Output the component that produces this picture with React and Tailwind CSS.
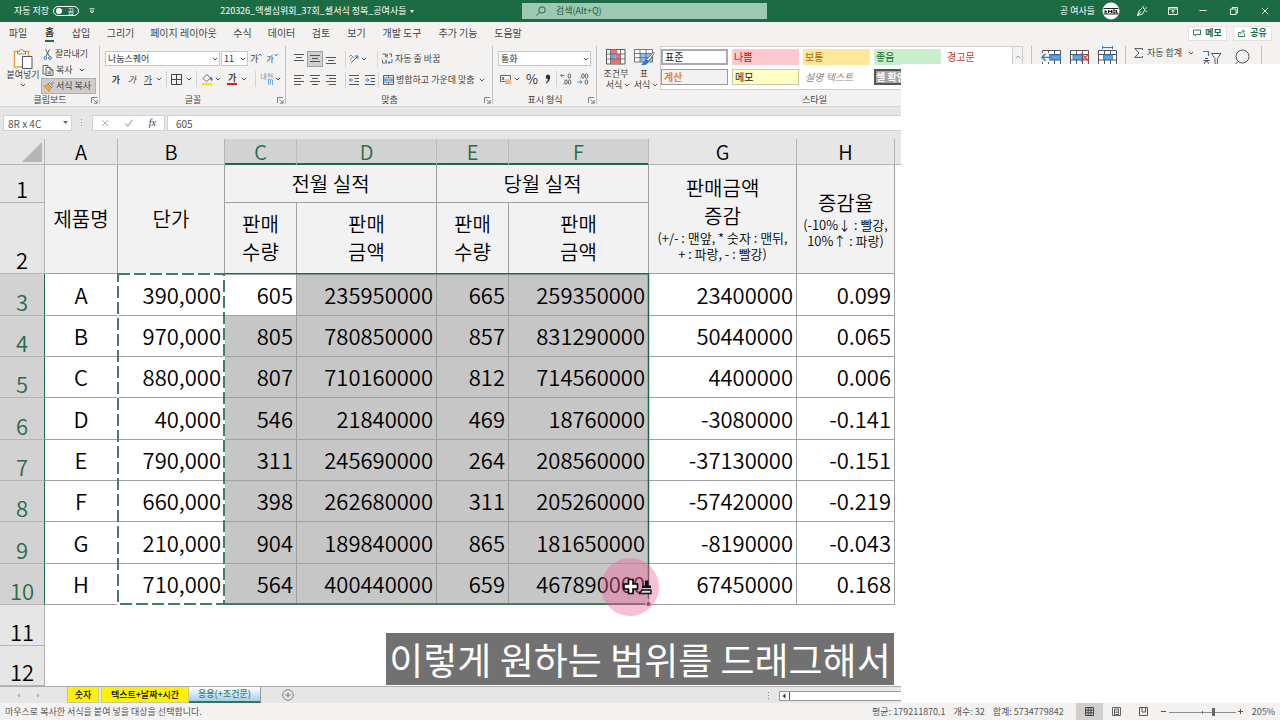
import React from 'react';

const Chevron = ({ className = '' }) => (
  <svg viewBox="0 0 6 4" className={`h-1 w-1.5 shrink-0 ${className}`} fill="none" stroke="#555" strokeWidth="1">
    <path d="M0.8 0.8 3 3 5.2 0.8" />
  </svg>
);

const Launcher = () => (
  <button aria-label="대화 상자 표시" className="absolute right-0.5 bottom-0.5">
    <svg viewBox="0 0 7 7" className="h-[7px] w-[7px]" fill="none" stroke="#666" strokeWidth="0.8">
      <path d="M0.5 6V0.5H6M2.5 2.5 6 6M6.2 3v3.2H3" />
    </svg>
  </button>
);

const Group = ({ label, className = '', launcher, children }) => (
  <section className={`relative flex shrink-0 flex-col ${className}`}>
    <div className="flex-1">{children}</div>
    <div className="h-3 text-center text-[9px] leading-3">{label}</div>
    {launcher && <Launcher />}
    <span className="absolute top-0.5 right-0 bottom-0.5 w-px bg-[#c4c4c4]" />
  </section>
);

const Sep = () => <span className="h-4 w-px shrink-0 bg-[#d4d4d4]" />;

const Lines = ({ rows }) => (
  <svg viewBox="0 0 10 10" className="h-2.5 w-2.5" stroke="#555" strokeWidth="1">
    {rows.map(([a, b, y]) => (
      <path key={y} d={`M${a} ${y}.5H${b}`} />
    ))}
  </svg>
);

const aligns = {
  top: [[0, 10, 0], [2, 8, 3], [0, 10, 6]],
  middle: [[0, 10, 1], [2, 8, 4], [0, 10, 7]],
  bottom: [[0, 10, 3], [2, 8, 6], [0, 10, 9]],
  left: [[0, 10, 0], [0, 7, 3], [0, 10, 6], [0, 7, 9]],
  center: [[0, 10, 0], [2, 8, 3], [0, 10, 6], [2, 8, 9]],
  right: [[0, 10, 0], [3, 10, 3], [0, 10, 6], [3, 10, 9]],
};

const AlignButton = ({ kind, label, active }) => (
  <button
    aria-label={label}
    className={`flex h-4 w-4 items-center justify-center ${active ? 'border border-[#a0a0a0] bg-[#cfcfcf]' : ''}`}
  >
    <Lines rows={aligns[kind]} />
  </button>
);

const Indent = ({ flip, label }) => (
  <button aria-label={label} className="flex h-4 w-4 items-center justify-center">
    <svg viewBox="0 0 10 10" className="h-2.5 w-2.5" fill="none">
      <path d="M0 0.5H10M5.5 3.5H10M5.5 6.5H10M0 9.5H10" stroke="#555" />
      <path d={flip ? 'M0 5H4M2.4 3.4 4 5 2.4 6.6' : 'M4.2 5H0.5M2 3.4 0.5 5 2 6.6'} stroke="#2b7cd3" />
    </svg>
  </button>
);

const Decimals = ({ more, label }) => (
  <button aria-label={label} className="flex h-4 w-[17px] items-center justify-center">
    <svg viewBox="0 0 12 12" className="h-3 w-3" fill="none" stroke="#555" strokeWidth="0.9">
      {more ? (
        <>
          <path d="M4.5 2.5H0.8M2.2 1 0.6 2.5 2.2 4" stroke="#2b7cd3" />
          <ellipse cx="9.4" cy="3" rx="1.3" ry="2.2" />
          <ellipse cx="6" cy="9" rx="1.3" ry="2.2" />
          <ellipse cx="9.6" cy="9" rx="1.3" ry="2.2" />
          <path d="M3.4 11h.8" />
        </>
      ) : (
        <>
          <ellipse cx="6" cy="3" rx="1.3" ry="2.2" />
          <ellipse cx="9.6" cy="3" rx="1.3" ry="2.2" />
          <path d="M3.4 5h.8" />
          <path d="M0.5 9H5M3.4 7.4 5 9 3.4 10.6" stroke="#2b7cd3" />
          <ellipse cx="9.4" cy="9" rx="1.3" ry="2.2" />
        </>
      )}
    </svg>
  </button>
);

const Select = ({ label, value, className }) => (
  <div className={`relative h-[15px] ${className}`}>
    <select
      aria-label={label}
      className="block h-full w-full appearance-none border border-[#c8c6c4] bg-white pl-0.5 text-[9px] leading-3 text-[#333] outline-none"
    >
      <option>{value}</option>
    </select>
    <Chevron className="pointer-events-none absolute top-1.5 right-0.5" />
  </div>
);

const ribbonTabs = [
  ['파일', 'w-9'], ['홈', 'w-[27px]'], ['삽입', 'w-9'], ['그리기', 'w-[43px]'], ['페이지 레이아웃', 'w-[83px]'],
  ['수식', 'w-[35px]'], ['데이터', 'w-[43px]'], ['검토', 'w-9'], ['보기', 'w-[35px]'], ['개발 도구', 'w-14'],
  ['추가 기능', 'w-14'], ['도움말', 'w-11'],
];

const TitleBar = () => (
  <header className="flex h-[22px] items-center bg-[#1d6b45] pl-3.5 text-[9px] text-white">
    <span>자동 저장</span>
    <button role="switch" aria-checked="false" aria-label="자동 저장" className="ml-1 flex h-2.5 w-[26px] items-center justify-between rounded-full border border-white px-0.5 text-[7px] leading-none">
      <span className="h-1.5 w-1.5 rounded-full bg-white" />
      <span className="pr-0.5">끔</span>
    </button>
    <button aria-label="빠른 실행 도구 모음" className="ml-2.5">
      <svg viewBox="0 0 6 6" className="h-1.5 w-1.5" fill="none" stroke="#fff" strokeWidth="0.9">
        <path d="M0.5 0.8h5M1 3 3 5 5 3z" />
      </svg>
    </button>
    <div className="ml-[125px] flex items-center gap-1">
      <span>220326_엑셀심위회_37회_셀서식 정복_공여사들</span>
      <svg viewBox="0 0 4 3" className="h-[3px] w-1" fill="#fff"><path d="M0 0h4L2 3z" /></svg>
    </div>
    <label className="ml-auto flex h-4 w-[245px] items-center bg-[#9dc8b2] pl-3.5 text-[#1c5a3b]">
      <svg viewBox="0 0 10 10" className="h-2.5 w-2.5" fill="none" stroke="#1c5a3b" strokeWidth="0.9">
        <circle cx="6" cy="4" r="3.2" />
        <path d="M3.7 6.3.5 9.5" />
      </svg>
      <input placeholder="검색(Alt+Q)" aria-label="검색" className="ml-2.5 w-40 bg-transparent text-[9px] outline-none placeholder:text-[#1c5a3b]" />
    </label>
    <div className="ml-[293px] flex items-center">
      <span>공 여사들</span>
      <svg viewBox="0 0 18 18" className="ml-[7px] h-[18px] w-[18px]">
        <circle cx="9" cy="9" r="8.5" fill="#fff" />
        <path d="M1.5 6.5h15M1.5 12h15" stroke="#222" strokeWidth="1" />
        <path d="M3 8v3h2M3 9.500h2M6.500 11V8l1.500 2 1.500-2v3M11 8h2v3h-2zM14.500 8v3h1.500" stroke="#222" strokeWidth="1" fill="none" />
      </svg>
    </div>
    <div className="flex items-center">
      <button aria-label="펜" className="flex w-11 justify-center">
        <svg viewBox="0 0 12 12" className="h-3 w-3" fill="none" stroke="#fff" strokeWidth="0.9">
          <path d="M1.500 10.500 3 6l3.500-3.500 2.500 2L6.500 9zM7 2l1.200-1M9.500 3.500 11 2.500M9.500 6l1.500.5M1.500 10.500 5 6.500" />
        </svg>
      </button>
      <button aria-label="리본 메뉴 표시 옵션" className="flex w-[17px] justify-center">
        <svg viewBox="0 0 10 8" className="h-2 w-2.5" fill="none" stroke="#fff" strokeWidth="0.9">
          <path d="M.5.5h9v7h-9zM.5 2h9M5 6.500V3.200M3.500 4.700 5 3.200l1.500 1.500" />
        </svg>
      </button>
      <button aria-label="최소화" className="ml-1.5 flex w-[31px] justify-center">
        <svg viewBox="0 0 8 8" className="h-2 w-2" stroke="#fff"><path d="M0.500 3.500h7" /></svg>
      </button>
      <button aria-label="이전 크기로 복원" className="flex w-[31px] justify-center">
        <svg viewBox="0 0 8 8" className="h-2 w-2" fill="none" stroke="#fff" strokeWidth="0.9">
          <path d="M.5 2h5.500v5.500H.5zM2.200 2V.5h5.300V6H6" />
        </svg>
      </button>
      <button aria-label="닫기" className="flex w-[31px] justify-center">
        <svg viewBox="0 0 8 8" className="h-2 w-2" stroke="#fff" strokeWidth="0.9"><path d="m.8.8 6.400 6.400M7.200.8.800 7.200" /></svg>
      </button>
    </div>
  </header>
);

const TabStrip = () => (
  <nav className="flex h-[22px] items-center text-[10px] text-[#444]">
    {ribbonTabs.map(([t, w]) => (
      <button key={t} className={`flex shrink-0 justify-center whitespace-nowrap ${w}`}>
        <span className={t === '홈' ? 'border-b-2 border-[#1d6b45] leading-4 font-medium text-[#222]' : 'leading-4'}>{t}</span>
      </button>
    ))}
    <div className="mr-2 ml-auto flex gap-1.5 text-[9px] font-bold text-[#1d6b45]">
      <button className="flex h-[15px] w-[39px] items-center justify-center gap-1 border border-[#e3e3e3] bg-white">
        <svg viewBox="0 0 8 8" className="h-2 w-2" fill="none" stroke="#1d6b45" strokeWidth="0.9"><path d="M.5 1h7v4.500H3.500L2 7V5.500H.5z" /></svg>
        메모
      </button>
      <button className="flex h-[15px] w-[39px] items-center justify-center gap-1 border border-[#e3e3e3] bg-white">
        <svg viewBox="0 0 8 8" className="h-2 w-2" fill="none" stroke="#1d6b45" strokeWidth="0.9"><path d="M2 3.500H.6v4h6v-3M2.500 5c.3-2 1.500-2.700 3-2.700M4.500.6 6.500 2.300 4.500 4" /></svg>
        공유
      </button>
    </div>
  </nav>
);

const Clipboard = () => (
  <Group label="클립보드" launcher className="w-[100px]">
    <div className="flex pl-1.5">
      <button className="flex w-[34px] flex-col items-center pt-1 text-[9px] leading-3 whitespace-nowrap">
        <svg viewBox="0 0 20 21" className="h-[21px] w-5" fill="none">
          <path d="M1.500 3.500h14v15.500h-14z" fill="#fff" stroke="#eba03c" strokeWidth="1.500" />
          <path d="M4.500 6V3.500h2C6.500 0.800 10.500 0.800 10.500 3.500h2V6z" fill="#fff" stroke="#777" strokeWidth="0.9" />
          <path d="M9.500 8.500h9.500v12H9.500z" fill="#fff" stroke="#555" />
        </svg>
        <span>붙여넣기</span>
        <Chevron className="mt-0.5" />
      </button>
      <div className="ml-px flex w-[55px] flex-col pt-0.5 text-[9px] leading-4 whitespace-nowrap">
        <button className="flex h-4 items-center pl-0.5">
          <svg viewBox="0 0 10 11" className="h-[11px] w-2.5" fill="none">
            <path d="M2.500.5 6.500 7.500M6.500.5 2.800 7.500" stroke="#555" />
            <circle cx="2.300" cy="9" r="1.400" stroke="#2b7cd3" />
            <circle cx="7" cy="9" r="1.400" stroke="#2b7cd3" />
          </svg>
          <span className="ml-0.5">잘라내기</span>
        </button>
        <button className="flex h-4 items-center pl-px">
          <svg viewBox="0 0 12 11" className="h-[11px] w-3" fill="none" stroke="#555" strokeWidth="0.9">
            <path d="M3.500 9H1V.5h5v1.500M4 2.500h4L11 5v5.500H4zM8 2.500V5h3M5.500 7h4M5.500 8.700h4" />
          </svg>
          <span className="ml-0.5">복사</span>
          <Chevron className="ml-1.5" />
        </button>
        <button className="flex h-4 items-center border border-[#b0b0b0] bg-[#cfcdcb] pl-px">
          <svg viewBox="0 0 11 11" className="h-[11px] w-[11px]">
            <path d="m1 5 4-2 3.500 3.500L6 10.500z" fill="#f3a54a" stroke="#c97a1e" strokeWidth="0.600" />
            <path d="m5 3 1.200-1.200L9.500 5 8.500 6.500zM7.500 3 9.500.7l1 1L8.500 4z" fill="#fff" stroke="#555" strokeWidth="0.700" />
          </svg>
          <span className="ml-0.5">서식 복사</span>
        </button>
      </div>
    </div>
  </Group>
);

const FontGroup = () => (
  <Group label="글꼴" launcher className="w-[186px]">
    <div className="flex items-center pt-[7px] pl-[5px]">
      <Select label="글꼴" value="나눔스퀘어" className="w-[115px]" />
      <Select label="글꼴 크기" value="11" className="ml-px w-[27px]" />
      <button aria-label="글꼴 크기 크게" className="ml-0.5 flex text-[9px] leading-3">
        가
        <svg viewBox="0 0 4 4" className="h-1 w-1" fill="none" stroke="#2b7cd3"><path d="M.5 2.800 2 1l1.500 1.800" /></svg>
      </button>
      <button aria-label="글꼴 크기 작게" className="ml-1 flex text-[8px] leading-3">
        가
        <svg viewBox="0 0 4 4" className="h-1 w-1" fill="none" stroke="#2b7cd3"><path d="M.5 1 2 2.800 3.500 1" /></svg>
      </button>
    </div>
    <div className="mt-[5px] flex h-4 items-center pl-2 text-[9px] leading-none">
      <button className="w-4 font-bold" aria-label="굵게">가</button>
      <button className="w-4 italic" aria-label="기울임꼴">가</button>
      <button className="w-4 underline" aria-label="밑줄">가</button>
      <Chevron className="mr-1" />
      <Sep />
      <button aria-label="테두리" className="ml-1">
        <svg viewBox="0 0 11 11" className="h-[11px] w-[11px]" fill="none" stroke="#444"><path d="M.5.5h10v10H.5zM5.500.5v10M.5 5.500h10" /></svg>
      </button>
      <Chevron className="mx-1" />
      <Sep />
      <button aria-label="채우기 색" className="ml-1">
        <svg viewBox="0 0 12 13" className="h-[13px] w-3" fill="none">
          <path d="m2 5.500 3.800-4L9.500 5 5.500 8.700z" fill="#fff" stroke="#555" strokeWidth="0.9" />
          <path d="M10 4c1 1.500 1.500 2.500.8 3.500-1-.5-1.300-1.500-.8-3.500z" fill="#2b7cd3" stroke="#2b7cd3" />
          <path d="M0.500 10h11v2.500H.5z" fill="#ffe800" />
        </svg>
      </button>
      <Chevron className="mr-1.5 ml-0.5" />
      <button className="border-b-2 border-[#d8201a] px-px text-[9px] leading-[10px] font-bold">가</button>
      <Chevron className="mr-2 ml-1" />
      <Sep />
      <button aria-label="윗주 필드" className="ml-1 flex flex-col items-end text-[7px] leading-[7px] whitespace-nowrap text-[#888]">
        내천
        <svg viewBox="0 0 5 5" className="h-[5px] w-[5px]" fill="none" stroke="#6aa9e6"><path d="M.5 0v5M2.500 0v4M4.500 0v5" /></svg>
      </button>
      <Chevron className="ml-0.5" />
    </div>
  </Group>
);

const AlignGroup = () => (
  <Group label="맞춤" launcher className="w-[207px]">
    <div className="mt-[7px] flex h-4 items-center pl-[5px]">
      <AlignButton kind="top" label="위쪽 맞춤" />
      <AlignButton kind="middle" label="가운데 맞춤" active />
      <AlignButton kind="bottom" label="아래쪽 맞춤" />
      <span className="w-1.5" />
      <Sep />
      <button aria-label="방향" className="ml-0.5 flex items-center">
        <svg viewBox="0 0 12 12" className="h-3 w-3" fill="none">
          <path d="m1 4 2-2 3 3M2 7l3-4" stroke="#777" strokeWidth="0.800" />
          <path d="m3 10 7-7M6.800 3H10v3.200" stroke="#2b7cd3" />
        </svg>
        <Chevron className="ml-px" />
      </button>
      <span className="w-2.5" />
      <Sep />
      <button className="ml-1 flex items-center gap-0.5 text-[9px] whitespace-nowrap">
        <svg viewBox="0 0 11 12" className="h-3 w-[11px]" fill="none" strokeWidth="0.9">
          <path d="M.5 1h3v3M5 .5V5M5 2.500h1M7 1h2.500v3M.5 7v3H3M4 6.500V11M4 8.500h1" stroke="#555" />
          <path d="M10 6v3.500H6M7.500 8 6 9.500 7.500 11" stroke="#2b7cd3" />
        </svg>
        자동 줄 바꿈
      </button>
    </div>
    <div className="mt-[5px] flex h-4 items-center pl-[5px]">
      <AlignButton kind="left" label="왼쪽 맞춤" />
      <AlignButton kind="center" label="가운데 맞춤" />
      <AlignButton kind="right" label="오른쪽 맞춤" />
      <span className="w-1.5" />
      <Sep />
      <Indent label="내어쓰기" />
      <Indent label="들여쓰기" flip />
      <Sep />
      <button className="ml-1 flex items-center gap-0.5 text-[9px] whitespace-nowrap">
        <svg viewBox="0 0 11 10" className="h-2.5 w-[11px]" fill="none">
          <path d="M.5.5h10v9H.5zM.5 3h10M.5 7h10M5.500.5V3M5.500 7v2.500" stroke="#555" strokeWidth="0.9" />
          <path d="M1 3.300h9v3.400H1z" fill="#cfe6fb" />
          <path d="M1.500 5h8M3 3.500 1.500 5 3 6.500M8 3.500 9.500 5 8 6.500" stroke="#2b7cd3" />
        </svg>
        병합하고 가운데 맞춤
        <Chevron className="ml-0.5" />
      </button>
    </div>
  </Group>
);

const NumberGroup = () => (
  <Group label="표시 형식" launcher className="w-[104px]">
    <div className="pt-[7px] pl-[5px]"><Select label="표시 형식" value="통화" className="w-[93px]" /></div>
    <div className="mt-[5px] flex h-4 items-center pl-[7px]">
      <button aria-label="회계 표시 형식">
        <svg viewBox="0 0 12 11" className="h-[11px] w-3" fill="none">
          <path d="M.5 1.500h10v6H.5zM2 3l2 3M4 3 2 6" stroke="#555" strokeWidth="0.9" />
          <path d="M5 5.500h6V10H5z" fill="#f3a54a" />
          <path d="M5 6.700h6M5 8.400h6" stroke="#f8e3c8" strokeWidth="0.600" />
        </svg>
      </button>
      <Chevron className="ml-0.5" />
      <button className="ml-1.5 w-3 text-[13px] leading-4 text-[#333]">%</button>
      <button aria-label="쉼표 스타일" className="ml-1.5">
        <svg viewBox="0 0 8 10" className="h-2.5 w-2" fill="#333"><path d="M4 .5c3 0 3.500 5.500-1.500 9l-.7-.8C3.500 7.500 4 6 3.800 5.300 1 5.300 1.300.5 4 .5z" /></svg>
      </button>
      <span className="w-1" />
      <Sep />
      <Decimals label="자릿수 늘림" more />
      <Decimals label="자릿수 줄임" />
    </div>
  </Group>
);

const styleCells = [
  ['표준', 'border-2 border-[#ababab] bg-white px-0.5 text-[#222]'],
  ['나쁨', 'bg-[#ffc7ce] px-0.5 text-[#b3141b]'],
  ['보통', 'bg-[#ffe699] px-0.5 text-[#ad6a08]'],
  ['좋음', 'bg-[#c6efce] px-0.5 text-[#1a6a22]'],
  ['경고문', 'px-0.5 text-[#c8362b]'],
  ['계산', 'border border-[#9a9a9a] bg-[#f2f2f2] px-0.5 font-bold text-[#ee8220]'],
  ['메모', 'border border-[#c9c9a0] bg-[#ffffc4] px-0.5 text-[#222]'],
  ['설명 텍스트', 'px-0.5 text-[#8a8a8a] italic'],
  ['셀 확인', 'border-2 border-[#555] bg-[#a5a5a5] font-bold text-white'],
];

const StylesGroup = () => (
  <Group label="스타일" className="w-[435px]">
    <div className="flex pt-1 pl-[7px]">
      <button className="flex w-6 flex-col items-center text-[9px] leading-[11px] whitespace-nowrap">
        <svg viewBox="0 0 20 18" className="mb-0.5 h-[18px] w-5" fill="none">
          <path d="M.5 1.500h18.500v14.500H.5z" fill="#fff" stroke="#555" />
          <path d="M4.500 1.500h7v4.500h-7zM4.500 11h10v5h-10z" fill="#f2706b" />
          <path d="M9.500 6h5v5h-5z" fill="#f2706b" />
          <path d="M4.500 6h5v5h-5z" fill="#6aa9e6" />
          <path d="M4.500 1.500V16M14.500 1.500V16M.5 6H19M.5 11H19" stroke="#666" strokeWidth="0.9" />
        </svg>
        <span>조건부</span>
        <span className="flex items-center gap-0.5 pl-1">서식<Chevron /></span>
      </button>
      <button className="ml-1 flex w-6 flex-col items-center text-[9px] leading-[11px] whitespace-nowrap">
        <svg viewBox="0 0 21 18" className="mb-0.5 h-[18px] w-[21px]" fill="none">
          <path d="M.5 1.500h18v12.500H.5z" fill="#fff" />
          <path d="M6 6h12.500v8H6z" fill="#8ac0f0" />
          <path d="M.5 1.500h18v12.500H.5zM6 1.500V14M12 1.500V14M.5 5.500h18M.5 9.700h18" stroke="#666" strokeWidth="0.9" />
          <path d="m19.500 4-7 7.500 1.800 1.800L20.500 5z" fill="#fff" stroke="#555" strokeWidth="0.800" />
          <path d="M12.500 11.500c-2 0-2.300 3.500-5.500 5 3 1.500 7.500.3 7.300-3.200z" fill="#2b7cd3" />
        </svg>
        <span>표</span>
        <span className="flex items-center gap-0.5 pl-1">서식<Chevron /></span>
      </button>
      <div className="-mt-0.5 ml-1 flex border border-[#d0cecc] bg-white">
        <div className="grid grid-cols-5 gap-x-1 gap-y-0.5 py-0.5 text-[10px]">
          {styleCells.map(([t, c]) => (
            <button key={t} className={`h-4 w-[67px] overflow-hidden text-left leading-3 whitespace-nowrap ${c}`}>{t}</button>
          ))}
        </div>
        <div className="flex w-2.5 flex-col border-l border-[#d0cecc]">
          <button aria-label="위로" className="flex flex-1 items-center justify-center border-b border-[#d0cecc] bg-[#f3f2f1]"><Chevron className="rotate-180 opacity-50" /></button>
          <button aria-label="아래로" className="flex flex-1 items-center justify-center"><Chevron /></button>
        </div>
      </div>
    </div>
  </Group>
);

const CellIcon = ({ kind }) => (
  <svg viewBox="0 0 21 20" className="h-5 w-[21px]" fill="none">
    <path d="M1.500 4.500h18v14h-18z" fill="#fff" />
    <path d="M1.500 4.500h18v14h-18zM7.500 4.500v14M13.500 4.500v14M1.500 8.500h18M1.500 14h18" stroke="#555" />
    {kind === 'insert' && (
      <>
        <path d="M6 9h13.500v4.500H6z" fill="#5aa5ea" stroke="#2b7cd3" strokeWidth="0.800" />
        <path d="M8 7v9H1V7z" fill="#f3f2f1" />
        <path d="M11 11.300H1M4.500 7.800 1 11.300 4.500 14.800" stroke="#2b7cd3" strokeWidth="1.300" />
      </>
    )}
    {kind === 'delete' && (
      <>
        <path d="M4 9h9v4.500H4z" fill="#5aa5ea" stroke="#2b7cd3" strokeWidth="0.800" />
        <path d="m12 7.500 8 8M20 7.500l-8 8" stroke="#e0433c" strokeWidth="1.200" />
      </>
    )}
    {kind === 'format' && (
      <>
        <path d="M6.500 9h9v4.500h-9z" fill="#5aa5ea" stroke="#2b7cd3" strokeWidth="0.800" />
        <path d="M5.500 1.500h10M5.500 0v3M15.500 0v3" stroke="#2b7cd3" />
      </>
    )}
  </svg>
);

const CellsGroup = () => (
  <Group label="셀" className="w-[94px]">
    <div className="flex gap-[7px] pt-0.5 pl-[9px]">
      <button aria-label="삽입"><CellIcon kind="insert" /></button>
      <button aria-label="삭제"><CellIcon kind="delete" /></button>
      <button aria-label="서식"><CellIcon kind="format" /></button>
    </div>
  </Group>
);

const EditGroup = () => (
  <Group label="편집" className="w-[136px]">
    <div className="flex pt-px pl-2">
      <button className="flex h-4 items-center text-[9px] whitespace-nowrap">
        <svg viewBox="0 0 9 10" className="h-2.5 w-[9px]" fill="none" stroke="#555"><path d="M8.500 2V.6H.8L5 5 .8 9.400h7.700V8" /></svg>
        <span className="ml-1">자동 합계</span>
        <Chevron className="ml-1.5" />
      </button>
      <button aria-label="정렬 및 필터" className="ml-2 flex">
        <svg viewBox="0 0 20 18" className="mt-1 h-[18px] w-5" fill="none" stroke="#555">
          <path d="M1 2.500h5.500V7" stroke="#2b7cd3" strokeWidth="1.200" />
          <path d="M9.500 4.500h9.500l-3.700 5v7l-2.300-2v-5z" fill="#fff" />
          <path d="M3 9.500h3M1.500 11.500h6" />
          <circle cx="4.500" cy="14.500" r="2" />
        </svg>
      </button>
      <button aria-label="찾기 및 선택" className="ml-2.5 flex pt-1">
        <svg viewBox="0 0 18 19" className="h-[19px] w-[18px]" fill="none" stroke="#555"><circle cx="10.500" cy="7.500" r="6.500" /><path d="M6 12.500.8 18" /></svg>
      </button>
    </div>
  </Group>
);

const FormulaBar = () => (
  <div className="flex h-8 items-center bg-[#e6e6e6] pl-[3px] text-[#555]">
    <div className="relative h-4 w-[69px]">
      <input aria-label="이름 상자" defaultValue="8R x 4C" className="block h-full w-full border border-[#d2d2d2] bg-white pl-1 text-[10px] outline-none" />
      <svg viewBox="0 0 5 3" className="absolute top-1.5 right-1 h-[3px] w-[5px]" fill="#666"><path d="M0 0h5L2.500 3z" /></svg>
    </div>
    <svg viewBox="0 0 2 8" className="mx-[9px] h-2 w-0.5" fill="#999"><path d="M0 0h1v1H0zM0 3h1v1H0zM0 6h1v1H0z" /></svg>
    <div className="flex h-4 w-[73px] items-center justify-around border border-[#d2d2d2] bg-white">
      <button aria-label="취소"><svg viewBox="0 0 8 8" className="h-2 w-2" stroke="#b5b5b5"><path d="m.8.8 6.400 6.400M7.200.8.800 7.200" /></svg></button>
      <button aria-label="입력"><svg viewBox="0 0 8 8" className="h-2 w-2" fill="none" stroke="#b5b5b5" strokeWidth="1.300"><path d="m.5 4.500 2.300 2.500L7.500 1" /></svg></button>
      <button aria-label="함수 삽입" className="font-['Liberation_Serif',serif] text-[10px] leading-none text-[#333] italic">fx</button>
    </div>
    <input aria-label="수식 입력줄" defaultValue="605" className="ml-0.5 h-4 flex-1 border border-[#d2d2d2] bg-white pl-2 text-[10px] outline-none" />
  </div>
);

const columns = [
  ['A', 'w-[73px]'], ['B', 'w-[107px]'], ['C', 'w-[72px]'], ['D', 'w-[140px]'],
  ['E', 'w-[72px]'], ['F', 'w-[140px]'], ['G', 'w-[148px]'], ['H', 'w-[98px]'],
];
const selectedColumns = 'CDEF';

const data = [
  ['A', '390,000', '605', '235950000', '665', '259350000', '23400000', '0.099'],
  ['B', '970,000', '805', '780850000', '857', '831290000', '50440000', '0.065'],
  ['C', '880,000', '807', '710160000', '812', '714560000', '4400000', '0.006'],
  ['D', '40,000', '546', '21840000', '469', '18760000', '-3080000', '-0.141'],
  ['E', '790,000', '311', '245690000', '264', '208560000', '-37130000', '-0.151'],
  ['F', '660,000', '398', '262680000', '311', '205260000', '-57420000', '-0.219'],
  ['G', '210,000', '904', '189840000', '865', '181650000', '-8190000', '-0.043'],
  ['H', '710,000', '564', '400440000', '659', '467890000', '67450000', '0.168'],
];

const RowHead = ({ n, selected }) => (
  <th
    scope="row"
    className={`border-r border-b p-0 align-bottom text-[22px] leading-7 font-[350] ${
      selected
        ? 'border-r-[#1d6b45] border-b-[#b5b5b5] bg-[#d2d2d2] text-[#2a6a4c]'
        : 'border-[#b5b5b5] bg-[#e6e6e6] text-black'
    }`}
  >
    {n}
  </th>
);

const HeadCell = ({ className = '', children, ...rest }) => (
  <td {...rest} className={`border-r border-b border-[#a0a0a0] bg-[#f2f2f2] p-0 text-center text-[20px] leading-7 ${className}`}>
    {children}
  </td>
);

const Sheet = () => (
  <div className="relative">
    <table className="w-full table-fixed border-separate border-spacing-0 font-[350] text-black">
      <colgroup>
        <col className="w-[45px]" />
        {columns.map(([c, w]) => <col key={c} className={w} />)}
        <col />
      </colgroup>
      <thead>
        <tr className="h-[26px] text-[20px] leading-6">
          <th className="border-r border-b border-[#b5b5b5] bg-[#e6e6e6] p-0">
            <svg viewBox="0 0 20 20" className="mr-0.5 ml-auto h-5 w-5" fill="#b5b5b5"><path d="M20 0v20H0z" /></svg>
          </th>
          {columns.map(([c]) => (
            <th
              key={c}
              scope="col"
              className={`border-r border-b p-0 font-[350] ${
                selectedColumns.includes(c)
                  ? 'border-r-[#bcbcbc] border-b-[#1d6b45] bg-[#d2d2d2] text-[#2a6a4c] shadow-[inset_0_-1px_0_#1d6b45]'
                  : 'border-[#b5b5b5] bg-[#e6e6e6]'
              }`}
            >
              {c}
            </th>
          ))}
          <th className="border-b border-[#b5b5b5] bg-[#e6e6e6] p-0" />
        </tr>
      </thead>
      <tbody>
        <tr className="h-[38px]">
          <RowHead n={1} />
          <HeadCell rowSpan={2}>제품명</HeadCell>
          <HeadCell rowSpan={2}>단가</HeadCell>
          <HeadCell colSpan={2}>전월 실적</HeadCell>
          <HeadCell colSpan={2}>당월 실적</HeadCell>
          <HeadCell rowSpan={2} className="pb-0.5">
            판매금액<br />증감
            <div className="text-[13px] leading-4 whitespace-nowrap">(+/- : 맨앞, * 숫자 : 맨뒤,<br />+ : 파랑, - : 빨강)</div>
          </HeadCell>
          <HeadCell rowSpan={2}>
            증감율
            <div className="text-[13px] leading-4 whitespace-nowrap">(-10%↓ : 빨강,<br />10%↑ : 파랑)</div>
          </HeadCell>
        </tr>
        <tr className="h-[71px]">
          <RowHead n={2} />
          <HeadCell>판매<br />수량</HeadCell>
          <HeadCell>판매<br />금액</HeadCell>
          <HeadCell>판매<br />수량</HeadCell>
          <HeadCell>판매<br />금액</HeadCell>
        </tr>
        {data.map((row, r) => (
          <tr key={row[0]} className={r % 3 === 0 ? 'h-[42px]' : 'h-[41px]'}>
            <RowHead n={r + 3} selected />
            {row.map((v, c) => (
              <td
                key={c}
                className={`border-r border-b border-[#a0a0a0] p-0 pb-0.5 text-[22px] leading-8 ${c === 0 ? 'text-center' : 'pr-[3px] text-right'} ${
                  c > 1 && c < 6 && !(r === 0 && c === 2) ? 'bg-[#c6c6c6]' : 'bg-white'
                }`}
              >
                {v}
              </td>
            ))}
          </tr>
        ))}
        <tr className="h-[41px]"><RowHead n={11} /></tr>
        <tr className="h-10"><RowHead n={12} /></tr>
      </tbody>
    </table>

    <svg className="pointer-events-none absolute top-[134px] left-[117px] h-[333px] w-[534px]" fill="none">
      <path d="M1 1H107V331H1Z" stroke="#fff" strokeWidth="2" />
      <path d="M1 1H107V331H1Z" stroke="#3f8262" strokeWidth="2" strokeDasharray="12 4" />
      <path d="M108 .800H531.500V326M108 331H528" stroke="#1d6b45" strokeWidth="1.500" />
      <path d="M529.500 329h4v4h-4z" fill="#444" stroke="#fff" strokeWidth="0.500" />
    </svg>
    <svg viewBox="0 0 58 58" className="pointer-events-none absolute top-[419px] left-[601px] h-[58px] w-[58px]">
      <circle cx="29" cy="29" r="29" fill="#f0609a" fillOpacity="0.4" />
      <path d="M27.500 21.500h4.500v4.500h4.500v5H32v4.500h-4.500V31H23v-5h4.500z" fill="#fff" stroke="#000" strokeWidth="1.600" />
      <path d="M44 22.500h3.500v5H50v4h-9v-4h3z" fill="#111" />
      <path d="M41 30.500h9" stroke="#fff" strokeWidth="0.800" />
      <path d="M41 32.200h9v3.300H38.500z" fill="#ddd" stroke="#111" strokeWidth="1.300" />
    </svg>
    <p className="absolute bottom-px left-[386px] w-[508px] bg-[#717171] text-center text-[37px] leading-[52px] whitespace-nowrap text-white">
      이렇게 원하는 범위를 드래그해서
    </p>
  </div>
);

const SheetTabs = () => (
  <div className="flex h-[17px] items-start border-t border-[#ababab] bg-[#e6e6e6] text-[9px] leading-[14px]">
    <button aria-label="이전 시트" className="ml-[17px]"><svg viewBox="0 0 4 15" className="h-[15px] w-1" fill="#b5b5b5"><path d="M3 6v5L.5 8.500z" /></svg></button>
    <button aria-label="다음 시트" className="ml-[15px]"><svg viewBox="0 0 4 15" className="h-[15px] w-1" fill="#b5b5b5"><path d="M1 6v5l2.500-2.500z" /></svg></button>
    <div className="ml-[27px] flex items-start font-medium whitespace-nowrap">
      <button className="h-4 w-8 border-x border-b border-[#c8c8a0] bg-[#fff200] text-black">숫자</button>
      <button className="ml-0.5 h-4 w-[88px] border-x border-b border-[#c8c8a0] bg-[#fff200] text-black">텍스트+날짜+시간</button>
      <button className="h-4 w-[72px] border-r border-b-2 border-r-[#999] border-b-[#2c7a55] bg-linear-to-b from-white to-[#a6cdea] text-[#3d7f68]">응용(+조건문)</button>
    </div>
    <button aria-label="새 시트" className="mt-0.5 ml-[21px]">
      <svg viewBox="0 0 12 12" className="h-3 w-3" fill="none" stroke="#777" strokeWidth="0.9"><circle cx="6" cy="6" r="5.300" /><path d="M6 3.200v5.600M3.200 6h5.600" /></svg>
    </button>
    <div className="mt-1 ml-auto flex w-[512px] items-center">
      <svg viewBox="0 0 1 8" className="h-2 w-px" fill="#888"><path d="M0 0h1v1H0zM0 3h1v1H0zM0 6h1v1H0z" /></svg>
      <div className="ml-2.5 flex h-2.5 flex-1 border border-[#999] bg-white">
        <button aria-label="왼쪽으로 스크롤" className="w-2.5 border-r border-[#555]"><svg viewBox="0 0 9 8" className="h-2 w-[9px]" fill="#333"><path d="M5.500 1.500v5L2.500 4z" /></svg></button>
      </div>
    </div>
  </div>
);

const StatusBar = () => (
  <footer className="flex h-[17px] items-center bg-[#f3f2f1] pl-[5px] text-[9px] whitespace-nowrap text-[#555]">
    <span>마우스로 복사한 서식을 붙여 넣을 대상을 선택합니다.</span>
    <div className="ml-auto flex gap-2">
      <span>평균: 179211870.1</span>
      <span>개수: 32</span>
      <span>합계: 5734779842</span>
    </div>
    <div className="ml-3 flex h-full">
      <button aria-label="기본" className="flex w-[27px] items-center justify-center bg-[#d0cfce]">
        <svg viewBox="0 0 9 9" className="h-[9px] w-[9px]" fill="none" stroke="#444"><path d="M.5.5h8v8h-8zM3.200.5v8M5.800.5v8M.5 3.200h8M.5 5.800h8" /></svg>
      </button>
      <button aria-label="페이지 레이아웃" className="flex w-[27px] items-center justify-center">
        <svg viewBox="0 0 9 9" className="h-[9px] w-[9px]" fill="none" stroke="#555" strokeWidth="0.9"><path d="M.5.5h8v8h-8zM2.500 2h4v5.500h-4zM3.500 4h2M3.500 5.500h2" /></svg>
      </button>
      <button aria-label="페이지 나누기 미리 보기" className="flex w-[27px] items-center justify-center">
        <svg viewBox="0 0 9 9" className="h-[9px] w-[9px]" fill="none" stroke="#555"><path d="M.5.5h8v8h-8zM3 .5v4.500h3.500V.5" /></svg>
      </button>
    </div>
    <button aria-label="축소" className="ml-1"><svg viewBox="0 0 6 6" className="h-1.5 w-1.5" stroke="#555"><path d="M0 2.500h5" /></svg></button>
    <div className="relative ml-0.5 flex h-2.5 w-[67px] items-center">
      <span className="absolute inset-x-0 top-[5px] h-px bg-[#8a8a8a]" />
      <span className="absolute top-1 left-[33px] h-[3px] w-px bg-[#777]" />
      <input
        type="range"
        aria-label="확대/축소"
        min="0"
        max="100"
        defaultValue="68"
        className="relative block h-2.5 w-full appearance-none bg-transparent [&::-webkit-slider-thumb]:h-2 [&::-webkit-slider-thumb]:w-[3px] [&::-webkit-slider-thumb]:appearance-none [&::-webkit-slider-thumb]:bg-[#666]"
      />
    </div>
    <button aria-label="확대" className="ml-0.5"><svg viewBox="0 0 6 6" className="h-1.5 w-1.5" stroke="#555"><path d="M0 2.500h5M2.500 0v5" /></svg></button>
    <span className="mr-[5px] ml-2">205%</span>
  </footer>
);

export default function App() {
  return (
    <div className="relative flex min-h-screen flex-col overflow-hidden bg-white font-['Noto_Sans_CJK_KR',sans-serif]">
      <TitleBar />
      <div className="bg-[#f3f2f1] text-[#444]">
        <TabStrip />
        <div className="flex h-[63px] border-b border-[#d6d6d6]">
          <Clipboard />
          <FontGroup />
          <AlignGroup />
          <NumberGroup />
          <StylesGroup />
          <CellsGroup />
          <EditGroup />
        </div>
      </div>
      <FormulaBar />
      <Sheet />
      <SheetTabs />
      <StatusBar />
      <div className="absolute top-16 right-0 bottom-[17px] left-[901px] bg-white" />
    </div>
  );
}
